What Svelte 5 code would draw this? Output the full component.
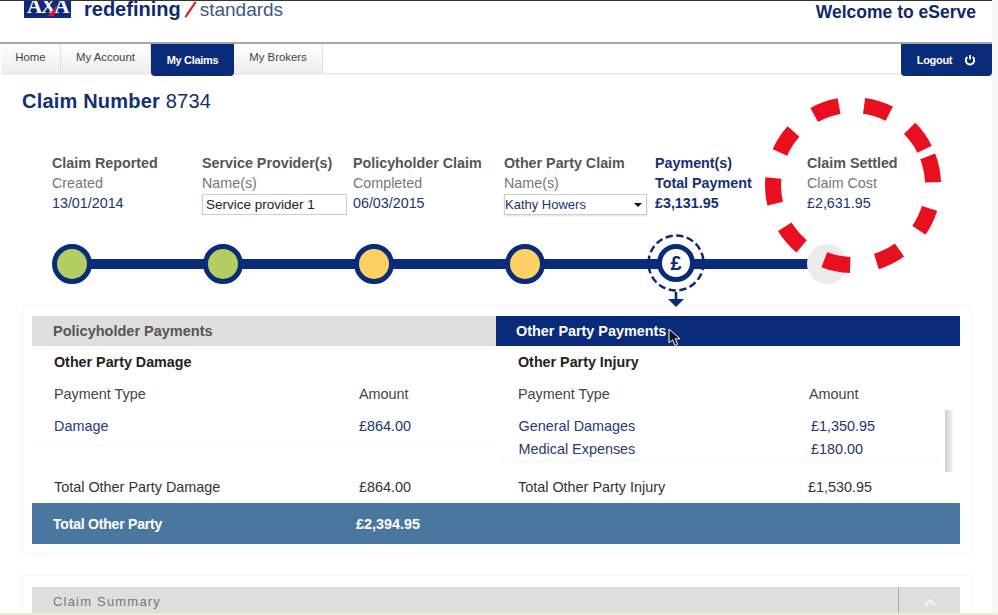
<script lang="ts">
  const tabs = [
    { label: 'Home', width: 60 },
    { label: 'My Account', width: 90 },
    { label: 'My Claims', width: 83, active: true },
    { label: 'My Brokers', width: 89 }
  ];

  const steps = [
    { title: 'Claim Reported', sub: 'Created', value: '13/01/2014' },
    { title: 'Service Provider(s)', sub: 'Name(s)', input: 'Service provider 1' },
    { title: 'Policyholder Claim', sub: 'Completed', value: '06/03/2015' },
    { title: 'Other Party Claim', sub: 'Name(s)', select: 'Kathy Howers' },
    { title: 'Payment(s)', sub: 'Total Payment', value: '£3,131.95', current: true },
    { title: 'Claim Settled', sub: 'Claim Cost', value: '£2,631.95' }
  ];

  const dots = ['green', 'green', 'amber', 'amber', 'pound', 'todo'];

  // hand drawn marker round "Claim Settled", degrees clockwise from north
  const dashes = [
    [-29, -10], [8, 27], [45, 63.5], [69, 88], [107, 124.5],
    [144.5, 163], [182, 201], [220, 238.5], [256.5, 275], [294, 312]
  ];

  function arc(from: number, to: number): string {
    const r = 80;
    const point = (deg: number) => {
      const a = (deg * Math.PI) / 180;
      return `${(90 + r * Math.sin(a)).toFixed(1)} ${(90 - r * Math.cos(a)).toFixed(1)}`;
    };
    return `M${point(from)} A${r} ${r} 0 0 1 ${point(to)}`;
  }
</script>

<div class="page">
  <header class="top">
    <div class="brand">
      <div class="logo">
        <span class="logo-text">AXA</span>
        <svg class="logo-slash" viewBox="0 0 47 17" aria-hidden="true">
          <path d="M24 15 L33 4 L30 15 Z" fill="#e8112d" />
        </svg>
      </div>
      <div class="tagline">
        <b>redefining</b>
        <svg class="slash" viewBox="0 0 14 18" aria-hidden="true">
          <path d="M1 17 L12 1" stroke="#d9232e" stroke-width="2.4" />
        </svg>
        <span>standards</span>
      </div>
    </div>
    <div class="welcome">Welcome to eServe</div>
  </header>

  <nav class="nav">
    {#each tabs as tab}
      <div class="tab" class:active={tab.active} style="width: {tab.width}px">{tab.label}</div>
    {/each}
    <div class="logout">
      <span>Logout</span>
      <svg viewBox="0 0 12 12" width="12" height="12" aria-hidden="true">
        <path d="M3.4 3 A4.2 4.2 0 1 0 8.6 3" fill="none" stroke="#fff" stroke-width="1.9" />
        <path d="M6 1 V5.6" stroke="#fff" stroke-width="1.9" />
      </svg>
    </div>
  </nav>

  <main class="main">
    <h1>Claim Number <span>8734</span></h1>

    <section class="steps">
      {#each steps as step}
        <div class="step" class:current={step.current}>
          <div class="step-title">{step.title}</div>
          <div class="step-sub">{step.sub}</div>
          {#if step.input}
            <div class="field input">{step.input}</div>
          {:else if step.select}
            <div class="field select">{step.select}<i class="caret"></i></div>
          {:else}
            <div class="step-value">{step.value}</div>
          {/if}
        </div>
      {/each}
    </section>

    <div class="track">
      <div class="line"></div>
      {#each dots as dot}
        <div class="slot">
          {#if dot === 'pound'}
            <div class="pound">
              <svg class="ring" viewBox="0 0 58 58" width="58" height="58" aria-hidden="true">
                <circle cx="29" cy="29" r="27.5" fill="none" stroke="#0a2a7a" stroke-width="2.5" stroke-dasharray="7.3 3.5" />
              </svg>
              <div class="pound-face">£</div>
              <svg class="drop" viewBox="0 0 16 15" width="16" height="15" aria-hidden="true">
                <path d="M8 0 V8" stroke="#0a2a7a" stroke-width="2.6" />
                <path d="M0 7 H16 L8 15 Z" fill="#0a2a7a" />
              </svg>
            </div>
          {:else}
            <div class="dot {dot}"></div>
          {/if}
        </div>
      {/each}
    </div>

    <section class="panel">
      <div class="tabs-row">
        <div class="pay-tab">Policyholder Payments</div>
        <div class="pay-tab on">Other Party Payments</div>
      </div>

      <div class="cols">
        <div class="col left">
          <h2>Other Party Damage</h2>
          <div class="row head"><span>Payment Type</span><span>Amount</span></div>
          <div class="list">
            <div class="row item"><a>Damage</a><span>£864.00</span></div>
          </div>
          <div class="row total"><span>Total Other Party Damage</span><span>£864.00</span></div>
        </div>
        <div class="col right">
          <h2>Other Party Injury</h2>
          <div class="row head"><span>Payment Type</span><span>Amount</span></div>
          <div class="list">
            <div class="row item"><a>General Damages</a><span>£1,350.95</span></div>
            <div class="row item"><a>Medical Expenses</a><span>£180.00</span></div>
            <div class="scrollbar"></div>
          </div>
          <div class="row total"><span>Total Other Party Injury</span><span>£1,530.95</span></div>
        </div>
      </div>

      <div class="grand"><span class="grand-label">Total Other Party</span><span class="grand-value">£2,394.95</span></div>
    </section>

    <section class="summary">
      <div class="summary-bar">
        <span>Claim Summary</span>
        <div class="toggle">
          <svg viewBox="0 0 12 7" width="12" height="7" aria-hidden="true">
            <path d="M1 6 L6 1.5 L11 6" fill="none" stroke="#f4f4f4" stroke-width="2.4" />
          </svg>
        </div>
      </div>
    </section>
  </main>

  <svg class="marker" viewBox="0 0 180 180" width="180" height="180" aria-hidden="true">
    {#each dashes as [from, to]}
      <path d={arc(from, to)} fill="none" stroke="#e8101f" stroke-width="16" />
    {/each}
  </svg>

  <svg class="cursor" viewBox="0 0 14 20" width="14" height="20" aria-hidden="true">
    <path d="M1 1 V15 L4.6 11.8 L7 17.6 L9.6 16.4 L7.2 10.8 H12 Z" fill="#111" stroke="#fff" stroke-width="1" />
  </svg>

  <div class="side"></div>
  <div class="edge"></div>
</div>

<style>
  :global(body) {
    margin: 0;
    background: #fff;
    font-family: "Liberation Sans", Arial, sans-serif;
  }

  .page {
    position: relative;
    width: 998px;
    height: 615px;
    overflow: hidden;
    background: #fff;
    color: #333;
  }

  .top {
    height: 42px;
    display: flex;
    justify-content: space-between;
    border-top: 1px solid #333;
    box-sizing: border-box;
    padding: 0 22px 0 24px;
  }

  .brand {
    display: flex;
    align-items: flex-start;
    gap: 13px;
  }

  .logo {
    position: relative;
    width: 47px;
    height: 17px;
    background: #0f2a7c;
    overflow: hidden;
    text-align: center;
  }

  .logo-text {
    display: block;
    margin-top: -5px;
    color: #fff;
    font-family: "Liberation Serif", serif;
    font-weight: bold;
    font-size: 21px;
    line-height: 20px;
    letter-spacing: -1.5px;
  }

  .logo-slash {
    position: absolute;
    inset: 0;
  }

  .tagline {
    display: flex;
    align-items: flex-start;
    height: 18px;
    line-height: 17px;
    color: #15306f;
    font-size: 19.5px;
  }

  .tagline b {
    color: #102a72;
    font-size: 20px;
  }

  .tagline span {
    color: #3d5688;
    font-size: 19px;
  }

  .slash {
    width: 14px;
    height: 17px;
    margin: 0 2px 0 3px;
  }

  .welcome {
    margin-top: 1px;
    color: #11296b;
    font-weight: bold;
    font-size: 17.5px;
    line-height: 20px;
  }

  .nav {
    display: flex;
    height: 31px;
    margin-right: 6px;
    padding-left: 1px;
    border-top: 2px solid #a8a8ad;
    box-sizing: border-box;
    box-shadow: 0 1px 2px rgba(0, 0, 0, 0.14);
    background: #fff;
  }

  .tab {
    display: flex;
    align-items: center;
    justify-content: center;
    box-sizing: border-box;
    background: linear-gradient(#fff, #eceded);
    border-right: 1px solid #e0e0e0;
    color: #444;
    font-size: 11.4px;
    padding-bottom: 3px;
  }

  .tab.active {
    height: 32px;
    background: #0a2a7a;
    border: 0;
    border-radius: 0 0 4px 4px;
    color: #fff;
    font-size: 11px;
    font-weight: bold;
    letter-spacing: -0.3px;
    padding-bottom: 0;
  }

  .logout {
    margin-left: auto;
    width: 91px;
    height: 32px;
    display: flex;
    align-items: center;
    justify-content: center;
    gap: 12px;
    background: #0a2a7a;
    border-radius: 0 0 4px 4px;
    color: #fff;
    font-size: 11px;
    font-weight: bold;
    letter-spacing: -0.3px;
  }

  .main {
    padding: 0 0 0 22px;
  }

  h1 {
    margin: 17px 0 0;
    color: #12306f;
    font-size: 20px;
    line-height: 22px;
    font-weight: bold;
    letter-spacing: 0.2px;
  }

  h1 span {
    font-weight: normal;
  }

  .steps {
    display: grid;
    grid-template-columns: 150px 151px 151px 151px 152px 150px;
    margin: 41px 0 0 30px;
  }

  .step {
    font-size: 14.3px;
    line-height: 20px;
    white-space: nowrap;
  }

  .step-title {
    color: #555;
    font-weight: bold;
  }

  .step-sub {
    color: #777;
  }

  .step-value {
    color: #1a3572;
  }

  .step.current .step-title,
  .step.current .step-sub,
  .step.current .step-value {
    color: #162f73;
    font-weight: bold;
  }

  .field {
    box-sizing: border-box;
    height: 21px;
    margin-top: 1px;
    border: 1px solid #ccc;
    background: #fff;
    color: #222;
    line-height: 19px;
  }

  .input {
    width: 145px;
    padding-left: 3px;
    font-size: 13.5px;
  }

  .select {
    position: relative;
    width: 143px;
    color: #1a3572;
    font-size: 13px;
    box-shadow: 0 1px 2px rgba(0, 0, 0, 0.12);
  }

  .caret {
    position: absolute;
    right: 4px;
    top: 8px;
    border: 4px solid transparent;
    border-top: 4px solid #111;
    border-bottom: 0;
  }

  .track {
    position: relative;
    display: grid;
    grid-template-columns: repeat(6, 151px);
    margin: 29px 0 0 30px;
    height: 42px;
  }

  .line {
    position: absolute;
    left: 20px;
    width: 736px;
    top: 15px;
    height: 10px;
    background: #0a2a7a;
  }

  .slot {
    position: relative;
  }

  .dot {
    position: relative;
    box-sizing: border-box;
    width: 40px;
    height: 40px;
    border-radius: 50%;
    border: 5px solid #0a2a7a;
  }

  .dot.green {
    background: #b3cd62;
  }

  .dot.amber {
    background: #fdd063;
  }

  .dot.todo {
    background: #ebebeb;
    border: 0;
  }

  .pound {
    position: absolute;
    left: -9px;
    top: -10px;
    width: 58px;
    height: 58px;
  }

  .ring {
    position: absolute;
    inset: 0;
  }

  .pound-face {
    position: absolute;
    left: 10px;
    top: 10px;
    box-sizing: border-box;
    width: 38px;
    height: 38px;
    border: 5px solid #0a2a7a;
    border-radius: 50%;
    background: #fff;
    color: #0a2a7a;
    font-size: 20px;
    font-weight: bold;
    line-height: 28px;
    text-align: center;
  }

  .drop {
    position: absolute;
    left: 21px;
    top: 58px;
  }

  .panel {
    margin-top: 19px;
    padding: 10px 11px 0 9px;
    border: 1px solid #f4f4f4;
    width: 950px;
    box-sizing: border-box;
    height: 249px;
    border-radius: 3px;
  }

  .tabs-row {
    display: grid;
    grid-template-columns: 464px 464px;
    height: 30px;
  }

  .pay-tab {
    display: flex;
    align-items: center;
    padding-left: 21px;
    background: #dedede;
    color: #555;
    font-size: 14.5px;
    font-weight: bold;
  }

  .pay-tab.on {
    padding-left: 20px;
    background: #0a2a7a;
    color: #fff;
    font-size: 14.4px;
  }

  .cols {
    display: grid;
    grid-template-columns: 464px 464px;
    height: 157px;
  }

  .col {
    padding-left: 22px;
    font-size: 14.4px;
  }

  h2 {
    margin: 7px 0 0;
    color: #222;
    font-size: 14.3px;
    line-height: 18px;
    font-weight: bold;
  }

  .row {
    display: grid;
    line-height: 20px;
  }

  .left .row {
    grid-template-columns: 305px 1fr;
  }

  .right .row {
    grid-template-columns: 291px 1fr;
  }

  .head {
    margin-top: 13px;
    color: #444;
  }

  .list {
    position: relative;
    margin-top: 12px;
    border-bottom: 1px solid #f5f5f5;
    box-sizing: border-box;
  }

  .left .list {
    height: 30px;
    margin-left: -20px;
    padding-left: 20px;
    margin-bottom: 31px;
  }

  .right .list {
    height: 45px;
    margin-left: -18px;
    margin-right: 20px;
    padding-left: 18.5px;
    margin-bottom: 16px;
  }

  .item {
    height: 23px;
    color: #1a3572;
  }

  .right .list .row {
    grid-template-columns: 292.5px 1fr;
  }

  a {
    color: #1f3a78;
  }

  .total {
    color: #333;
  }

  .right .total {
    grid-template-columns: 290px 1fr;
  }

  .scrollbar {
    position: absolute;
    right: -13px;
    top: -6px;
    width: 8px;
    height: 62px;
    background: linear-gradient(90deg, #cfcfcf, #f5f5f5);
  }

  .grand {
    display: grid;
    grid-template-columns: 303px 1fr;
    align-items: center;
    height: 41px;
    padding-left: 21px;
    background: #4a779f;
    color: #fff;
    font-weight: bold;
  }

  .grand-label {
    font-size: 14px;
    letter-spacing: -0.2px;
  }

  .grand-value {
    font-size: 14.4px;
  }

  .summary {
    margin-top: 21px;
    width: 950px;
    box-sizing: border-box;
    padding: 11px 11px 0 9px;
    border: 1px solid #f4f4f4;
    height: 60px;
  }

  .summary-bar {
    display: flex;
    justify-content: space-between;
    height: 40px;
    padding-left: 21px;
    background: #dedede;
    color: #777;
    font-size: 13px;
    letter-spacing: 1.2px;
    line-height: 30px;
  }

  .toggle {
    box-sizing: border-box;
    width: 62px;
    height: 40px;
    border-left: 1px solid #aaa;
    display: flex;
    justify-content: center;
    padding-top: 12px;
  }

  .marker {
    position: absolute;
    left: 763px;
    top: 95px;
  }

  .cursor {
    position: absolute;
    left: 668px;
    top: 328px;
  }

  .side {
    position: absolute;
    top: 0;
    right: 0;
    bottom: 0;
    width: 6px;
    background: #f8f8f8;
  }

  .edge {
    position: absolute;
    left: 0;
    right: 0;
    bottom: 0;
    height: 2px;
    background: #e8efcf;
  }
</style>
